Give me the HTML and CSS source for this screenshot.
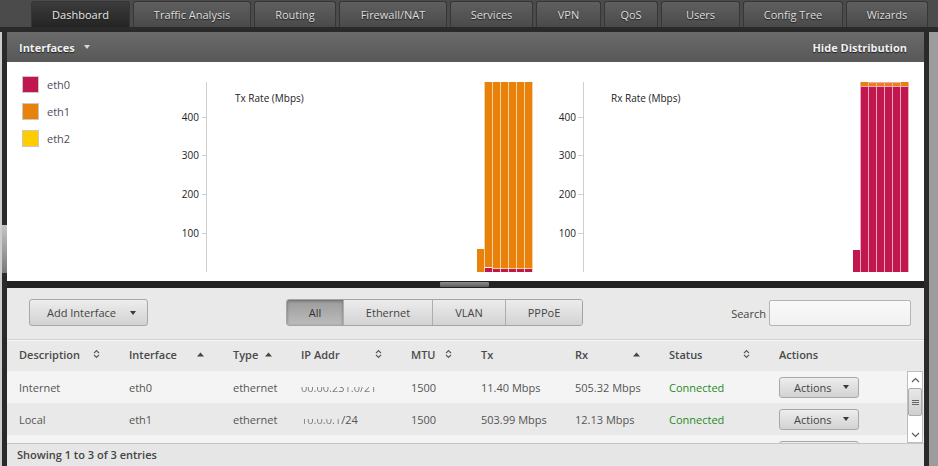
FILE: index.html
```html
<!DOCTYPE html>
<html>
<head>
<meta charset="utf-8">
<link rel="stylesheet" href="styles.css">
</head>
<body>
<nav class="tabs">
  <div class="tab active">Dashboard</div>
  <div class="tab">Traffic Analysis</div>
  <div class="tab">Routing</div>
  <div class="tab">Firewall/NAT</div>
  <div class="tab">Services</div>
  <div class="tab">VPN</div>
  <div class="tab">QoS</div>
  <div class="tab">Users</div>
  <div class="tab">Config Tree</div>
  <div class="tab">Wizards</div>
</nav>
<div class="frame">
  <div class="lstrip"><div class="lthumb"></div></div>
  <main class="main">
    <section class="panel">
      <header class="phead">
        <span class="ptitle">Interfaces <span class="caret caret-light"></span></span>
        <span class="paction">Hide Distribution</span>
      </header>
      <div class="dist">
        <ul class="legend">
          <li><span class="swatch sw-eth0"></span>eth0</li>
          <li><span class="swatch sw-eth1"></span>eth1</li>
          <li><span class="swatch sw-eth2"></span>eth2</li>
        </ul>
        <svg class="chart chart-tx" width="385" height="219" viewBox="0 0 385 219">
          <line x1="46.5" y1="20" x2="46.5" y2="210" stroke="#cfcfcf"/>
          <g stroke="#cfcfcf">
            <line x1="42" y1="55.5" x2="46" y2="55.5"/>
            <line x1="42" y1="93.5" x2="46" y2="93.5"/>
            <line x1="42" y1="132.5" x2="46" y2="132.5"/>
            <line x1="42" y1="171.5" x2="46" y2="171.5"/>
          </g>
          <g class="axis-label" text-anchor="end">
            <text x="39" y="59">400</text>
            <text x="39" y="97">300</text>
            <text x="39" y="136">200</text>
            <text x="39" y="175">100</text>
          </g>
          <text class="chart-title" x="75" y="40">Tx Rate (Mbps)</text>
          <rect x="317" y="187" width="7" height="23" fill="#e8820a"/>
          <rect x="324" y="20" width="49" height="190" fill="#f6cfa3"/>
          <g fill="#e8820a">
            <rect x="325" y="20" width="7" height="185"/>
            <rect x="333" y="20" width="7" height="186"/>
            <rect x="341" y="20" width="7" height="186"/>
            <rect x="349" y="20" width="7" height="186"/>
            <rect x="357" y="20" width="7" height="186"/>
            <rect x="365" y="20" width="7" height="186"/>
          </g>
          <rect x="325" y="205" width="7" height="1" fill="#ffffff"/>
          <g fill="#c0174f">
            <rect x="325" y="206" width="7" height="4"/>
            <rect x="333" y="207" width="7" height="3"/>
            <rect x="341" y="207" width="7" height="3"/>
            <rect x="349" y="207" width="7" height="3"/>
            <rect x="357" y="207" width="7" height="3"/>
            <rect x="365" y="207" width="7" height="3"/>
          </g>
        </svg>
        <svg class="chart chart-rx" width="379" height="219" viewBox="0 0 379 219">
          <line x1="38.5" y1="20" x2="38.5" y2="210" stroke="#cfcfcf"/>
          <g stroke="#cfcfcf">
            <line x1="33" y1="55.5" x2="38" y2="55.5"/>
            <line x1="33" y1="93.5" x2="38" y2="93.5"/>
            <line x1="33" y1="132.5" x2="38" y2="132.5"/>
            <line x1="33" y1="171.5" x2="38" y2="171.5"/>
          </g>
          <g class="axis-label" text-anchor="end">
            <text x="31" y="59">400</text>
            <text x="31" y="97">300</text>
            <text x="31" y="136">200</text>
            <text x="31" y="175">100</text>
          </g>
          <text class="chart-title" x="66" y="40">Rx Rate (Mbps)</text>
          <rect x="308" y="188" width="7" height="22" fill="#c0174f"/>
          <rect x="315" y="20" width="49" height="190" fill="#eea9bf"/>
          <g fill="#e8820a">
            <rect x="316" y="20" width="7" height="4"/>
            <rect x="324" y="21" width="7" height="3"/>
            <rect x="332" y="21" width="7" height="3"/>
            <rect x="340" y="21" width="7" height="3"/>
            <rect x="348" y="21" width="7" height="3"/>
            <rect x="356" y="20" width="7" height="4"/>
          </g>
          <g fill="#c0174f">
            <rect x="316" y="25" width="7" height="185"/>
            <rect x="324" y="25" width="7" height="185"/>
            <rect x="332" y="25" width="7" height="185"/>
            <rect x="340" y="25" width="7" height="185"/>
            <rect x="348" y="25" width="7" height="185"/>
            <rect x="356" y="25" width="7" height="185"/>
          </g>
        </svg>
      </div>
      <div class="hscroll"><div class="hthumb"></div></div>
    </section>

    <section class="ifaces">
      <div class="toolbar">
        <div class="btn btn-add">Add Interface <span class="caret"></span></div>
        <div class="segmented">
          <div class="seg seg-all active">All</div>
          <div class="seg seg-eth">Ethernet</div>
          <div class="seg seg-vlan">VLAN</div>
          <div class="seg seg-pppoe">PPPoE</div>
        </div>
        <label class="search">Search <span class="search-input"></span></label>
      </div>

      <div class="thead grid">
        <div class="th">Description <svg class="sort" width="7" height="10" viewBox="0 0 7 10"><path d="M1 4.2 L3.5 1.6 L6 4.2 M1 5.8 L3.5 8.4 L6 5.8" fill="none" stroke="#555" stroke-width="1.2"/></svg></div>
        <div class="th">Interface <svg class="sort" width="7" height="5" viewBox="0 0 7 5"><path d="M0 4.5 L3.5 0.5 L7 4.5Z" fill="#444"/></svg></div>
        <div class="th">Type <svg class="sort" width="7" height="5" viewBox="0 0 7 5"><path d="M0 4.5 L3.5 0.5 L7 4.5Z" fill="#444"/></svg></div>
        <div class="th">IP Addr <svg class="sort" width="7" height="10" viewBox="0 0 7 10"><path d="M1 4.2 L3.5 1.6 L6 4.2 M1 5.8 L3.5 8.4 L6 5.8" fill="none" stroke="#555" stroke-width="1.2"/></svg></div>
        <div class="th">MTU <svg class="sort" width="7" height="10" viewBox="0 0 7 10"><path d="M1 4.2 L3.5 1.6 L6 4.2 M1 5.8 L3.5 8.4 L6 5.8" fill="none" stroke="#555" stroke-width="1.2"/></svg></div>
        <div class="th">Tx</div>
        <div class="th">Rx <svg class="sort" width="7" height="5" viewBox="0 0 7 5"><path d="M0 4.5 L3.5 0.5 L7 4.5Z" fill="#444"/></svg></div>
        <div class="th">Status <svg class="sort" width="7" height="10" viewBox="0 0 7 10"><path d="M1 4.2 L3.5 1.6 L6 4.2 M1 5.8 L3.5 8.4 L6 5.8" fill="none" stroke="#555" stroke-width="1.2"/></svg></div>
        <div class="th">Actions</div>
      </div>

      <div class="tbody">
        <div class="row grid">
          <div>Internet</div>
          <div>eth0</div>
          <div>ethernet</div>
          <div><span class="redacted">00.00.231.0/21</span></div>
          <div>1500</div>
          <div>11.40 Mbps</div>
          <div>505.32 Mbps</div>
          <div class="ok">Connected</div>
          <div><span class="btn btn-act">Actions <span class="caret"></span></span></div>
        </div>
        <div class="row grid">
          <div>Local</div>
          <div>eth1</div>
          <div>ethernet</div>
          <div><span class="redacted">10.0.0.1</span>/24</div>
          <div>1500</div>
          <div>503.99 Mbps</div>
          <div>12.13 Mbps</div>
          <div class="ok">Connected</div>
          <div><span class="btn btn-act">Actions <span class="caret"></span></span></div>
        </div>
        <div class="row grid">
          <div></div><div></div><div></div><div></div><div></div><div></div><div></div><div></div>
          <div><span class="btn btn-act btn-stub"></span></div>
        </div>
        <div class="vscroll">
          <div class="vs-up"><svg width="9" height="6" viewBox="0 0 9 6"><path d="M1 5 L4.5 1.5 L8 5" fill="none" stroke="#555" stroke-width="1.1"/></svg></div>
          <div class="vs-thumb"><svg width="7" height="7" viewBox="0 0 7 7"><path d="M0 1.5 H7 M0 3.5 H7 M0 5.5 H7" stroke="#666" stroke-width="1"/></svg></div>
          <div class="vs-track"></div>
          <div class="vs-down"><svg width="9" height="6" viewBox="0 0 9 6"><path d="M1 1 L4.5 4.5 L8 1" fill="none" stroke="#555" stroke-width="1.1"/></svg></div>
        </div>
      </div>

      <div class="tfoot">Showing 1 to 3 of 3 entries</div>
    </section>
  </main>
  <div class="rgap"></div>
  <div class="rscroll"></div>
</div>
</body>
</html>
```

FILE: styles.css
```css
* { box-sizing: border-box; }

body {
  margin: 0;
  width: 938px;
  height: 466px;
  overflow: hidden;
  font-family: "Open Sans", "Noto Sans", sans-serif;
  font-size: 11px;
  background: #2a2a2a;
}

/* ---------- top tabs ---------- */
.tabs {
  display: flex;
  gap: 3px;
  height: 27px;
  padding: 1px 0 0 31px;
  background: #4b4b4b;
}
.tab {
  height: 26px;
  border: 1px solid #363636;
  border-bottom: none;
  border-radius: 3px 3px 0 0;
  background: linear-gradient(#5f5f5f, #4a4a4a);
  color: #dedede;
  text-shadow: 0 1px 1px #1e1e1e;
  display: flex;
  align-items: center;
  justify-content: center;
}
.tab.active {
  background: linear-gradient(#3c3c3c, #242424);
  color: #e8e8e8;
}
.tab:nth-child(1) { width: 99px; }
.tab:nth-child(2) { width: 118px; }
.tab:nth-child(3) { width: 82px; }
.tab:nth-child(4) { width: 108px; }
.tab:nth-child(5) { width: 83px; }
.tab:nth-child(6) { width: 65px; }
.tab:nth-child(7) { width: 54px; }
.tab:nth-child(8) { width: 79px; }
.tab:nth-child(9) { width: 100px; }
.tab:nth-child(10) { width: 82px; }

/* ---------- frame ---------- */
.frame {
  display: flex;
  height: 439px;
  padding-top: 5px;
  background: #2a2a2a;
}
.lstrip {
  width: 7px;
  border-left: 2px solid #cdcdcd;
  background: #2a2a2a;
}
.lthumb {
  margin-top: 193px;
  height: 48px;
  background: linear-gradient(#c4c4c4, #7a7a7a);
}
.main {
  width: 917px;
  display: flex;
  flex-direction: column;
}
.rgap { width: 5px; background: #2a2a2a; }
.rscroll { width: 9px; background: #9c9c9c; }

/* ---------- distribution panel ---------- */
.phead {
  height: 30px;
  display: flex;
  align-items: center;
  justify-content: space-between;
  padding: 0 17px 0 12px;
  background: linear-gradient(#6a6a6a, #585858);
  color: #f2f2f2;
  font-weight: 700;
  text-shadow: 0 1px 1px #1e1e1e;
}
.ptitle { display: flex; align-items: center; gap: 9px; }

.caret {
  display: inline-block;
  width: 0;
  height: 0;
  border-left: 3.5px solid transparent;
  border-right: 3.5px solid transparent;
  border-top: 4px solid #3a3a3a;
}
.caret-light { border-top-color: #d8d8d8; }

.dist {
  display: flex;
  height: 219px;
  background: #fff;
}
.legend {
  width: 153px;
  margin: 0;
  padding: 14px 0 0 15px;
  list-style: none;
  color: #4e4e5a;
}
.legend li {
  display: flex;
  align-items: center;
  height: 17px;
  margin-bottom: 10px;
}
.swatch {
  width: 17px;
  height: 17px;
  border: 1px solid #c9c9c9;
  margin-right: 8px;
}
.sw-eth0 { background: #c0174f; }
.sw-eth1 { background: #e8820a; }
.sw-eth2 { background: #ffcc00; }

.chart { display: block; }
.axis-label text { font-family: "Open Sans", sans-serif; font-size: 10px; fill: #222; }
.chart-title { font-family: "Open Sans", sans-serif; font-size: 10px; fill: #222; }

.hscroll {
  height: 7px;
  padding-top: 1px;
  background: #222;
}
.hthumb {
  margin-left: 433px;
  width: 49px;
  height: 5px;
  border-radius: 1px;
  background: linear-gradient(#8e8e8e, #5c5c5c);
}

/* ---------- interfaces table ---------- */
.ifaces {
  height: 178px;
  display: flex;
  flex-direction: column;
  background: #e9e9e9;
}
.toolbar {
  height: 51px;
  display: flex;
  align-items: flex-start;
  padding: 11px 13px 0 22px;
}
.btn {
  display: flex;
  align-items: center;
  border: 1px solid #a8a8a8;
  border-radius: 3px;
  background: linear-gradient(#ededed, #d2d2d2);
  color: #444;
}
.btn-add {
  width: 119px;
  height: 27px;
  padding-left: 17px;
  gap: 14px;
}
.segmented {
  margin-left: 138px;
  display: flex;
  width: 297px;
  height: 27px;
  border: 1px solid #a4a4a4;
  border-radius: 3px;
  overflow: hidden;
}
.seg {
  display: flex;
  align-items: center;
  justify-content: center;
  background: linear-gradient(#ececec, #d3d3d3);
  color: #444;
  border-left: 1px solid #adadad;
}
.seg.active {
  background: linear-gradient(#9b9b9b, #bcbcbc);
  box-shadow: inset 0 1px 3px rgba(0, 0, 0, 0.35);
  color: #333;
}
.seg-all { width: 56px; border-left: none; }
.seg-eth { width: 89px; }
.seg-vlan { width: 73px; }
.seg-pppoe { width: 77px; }

.search {
  margin-left: auto;
  margin-top: 1px;
  display: flex;
  align-items: center;
  gap: 3px;
  color: #444;
}
.search-input {
  width: 142px;
  height: 26px;
  border: 1px solid #b4b4b4;
  border-radius: 2px;
  background: linear-gradient(#f9f9f9, #f1f1f1);
}

.grid {
  display: grid;
  grid-template-columns: 110px 104px 68px 110px 70px 94px 94px 110px 1fr;
  align-items: center;
  padding-left: 12px;
}
.thead {
  height: 32px;
  padding-bottom: 3px;
  border-top: 1px solid #d2d2d2;
  box-shadow: inset 0 1px 0 #f6f6f6;
  font-weight: 600;
  color: #4a4a4a;
}
.th {
  display: flex;
  align-items: center;
  justify-content: space-between;
  padding-right: 29px;
}

.tbody {
  position: relative;
  height: 72px;
  overflow: hidden;
}
.row {
  height: 32px;
  color: #555;
}
.row:nth-child(odd) { background: #f4f4f4; }
.row:nth-child(even) { background: #e9e9e9; }
.ok { color: #1f8a1f; }

.redacted {
  background: linear-gradient(transparent 48%, #777 48%);
  -webkit-background-clip: text;
  background-clip: text;
  color: transparent;
}

.btn-act {
  width: 80px;
  height: 21px;
  padding: 0 9px 0 14px;
  justify-content: space-between;
}

.vscroll {
  position: absolute;
  top: 0;
  right: 1px;
  width: 16px;
  height: 72px;
  display: flex;
  flex-direction: column;
  border: 1px solid #bdbdbd;
  background: #fff;
}
.vs-up, .vs-down {
  height: 16px;
  display: flex;
  align-items: center;
  justify-content: center;
}
.vs-down { height: 14px; }
.vs-thumb {
  height: 28px;
  display: flex;
  align-items: center;
  justify-content: center;
  border: 1px solid #acacac;
  border-radius: 2px;
  background: linear-gradient(#e8e8e8, #cfcfcf);
}
.vs-track { flex: 1; }

.tfoot {
  height: 23px;
  display: flex;
  align-items: center;
  padding-left: 10px;
  padding-bottom: 1px;
  border-top: 1px solid #c6c6c6;
  background: #e6e6e6;
  font-weight: 600;
  color: #444;
}
```
